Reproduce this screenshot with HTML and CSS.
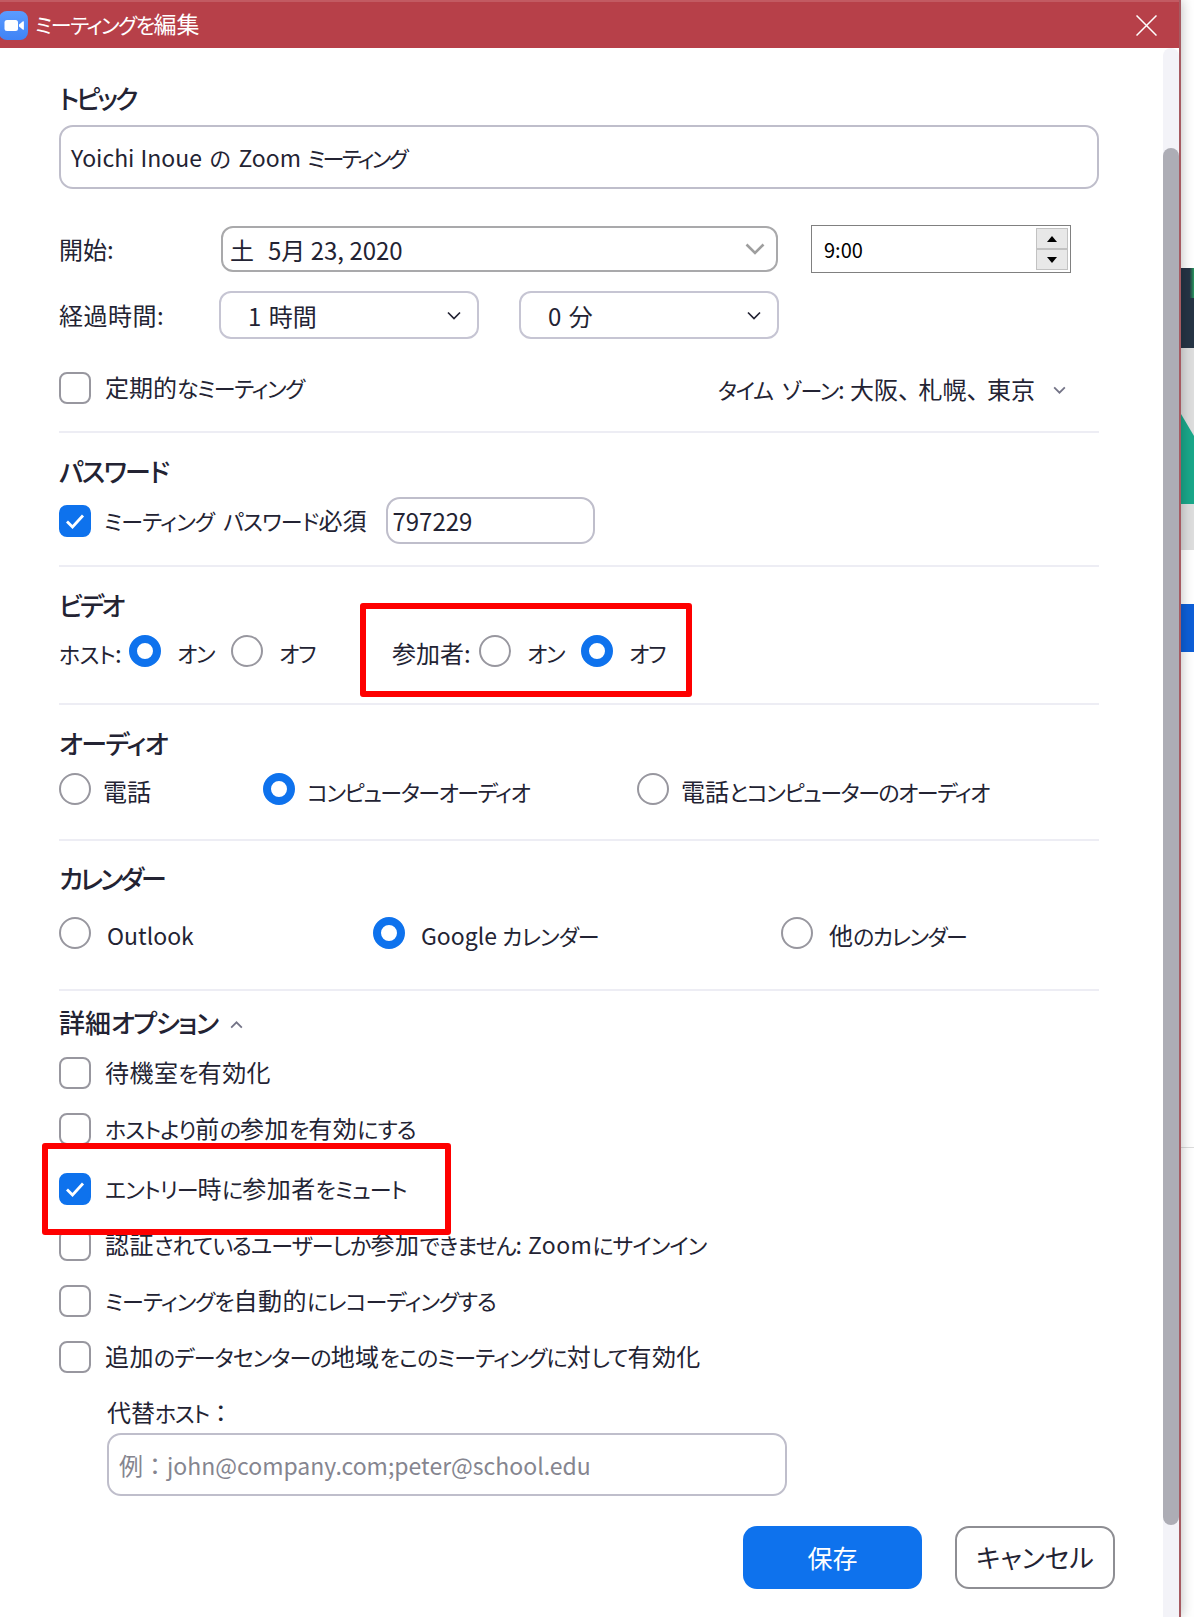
FILE: index.html
```html
<!DOCTYPE html>
<html lang="ja">
<head>
<meta charset="utf-8">
<title>ミーティングを編集</title>
<link rel="stylesheet" href="styles.css">
</head>
<body>
<div class="screen">
  <main class="dialog">
    <header class="titlebar">
      <svg class="logo" viewBox="0 0 29 29" width="29" height="29"><defs><linearGradient id="lg" x1="0" y1="0" x2="0" y2="1"><stop offset="0" stop-color="#5b9bff"/><stop offset="1" stop-color="#3f83f5"/></linearGradient></defs><rect x="-1" y="0" width="29" height="29" rx="8" fill="url(#lg)"/><rect x="4.5" y="9" width="13.5" height="11" rx="2.5" fill="#fff"/><path d="M19 13.5l4-3.2c.4-.3.9 0 .9.4v7.6c0 .5-.5.7-.9.4l-4-3.2z" fill="#fff"/></svg>
      <h1 class="title"><span class="k">ミーティングを</span>編集</h1>
      <svg class="close" viewBox="0 0 21 21" width="21" height="21"><path d="M.5.5l20 20M20.5.5l-20 20" stroke="#fff" stroke-width="1.5" fill="none"/></svg>
    </header>
    <div class="body">
      <div class="content">
        <section class="sec sec-topic">
          <h2 class="head narrow">トピック</h2>
          <div class="field topic"><span class="lat">Yoichi Inoue <span class="no">の</span> Zoom </span><span class="k">ミーティング</span></div>
          <div class="row-date">
            <span class="label label-date">開始:</span>
            <div class="date"><span class="date-text"><span class="dow">土</span>5月 23, 2020</span>
              <svg class="chev-big" viewBox="0 0 20 12" width="20" height="12"><path d="M1.5 1.5L10 10l8.5-8.5" fill="none" stroke="#9e9e9e" stroke-width="2.6"/></svg>
            </div>
            <div class="time"><span>9:00</span>
              <div class="spin">
                <div class="spin-btn"><svg viewBox="0 0 10 6" width="10" height="6"><path d="M5 0l5 6H0z" fill="#000"/></svg></div>
                <div class="spin-btn"><svg viewBox="0 0 10 6" width="10" height="6"><path d="M5 6L0 0h10z" fill="#000"/></svg></div>
              </div>
            </div>
          </div>
          <div class="row-dur">
            <span class="label label-dur">経過時間:</span>
            <div class="select"><span>1 時間</span><svg class="chev" viewBox="0 0 14 9" width="14" height="9"><path d="M1 1.5l6 6 6-6" fill="none" stroke="#232333" stroke-width="1.7"/></svg></div>
            <div class="select"><span>0 分</span><svg class="chev" viewBox="0 0 14 9" width="14" height="9"><path d="M1 1.5l6 6 6-6" fill="none" stroke="#232333" stroke-width="1.7"/></svg></div>
          </div>
          <div class="row-rec">
            <label class="opt"><span class="box"></span><span class="txt">定期的<span class="k">なミーティング</span></span></label>
            <div class="tz"><span><span class="k">タイム ゾーン</span>: 大阪<span class="fw">、</span>札幌<span class="fw">、</span>東京</span><svg viewBox="0 0 14 9" width="13" height="8"><path d="M1 1.5l6 6 6-6" fill="none" stroke="#747487" stroke-width="2"/></svg></div>
          </div>
        </section>

        <section class="sec sec-pass">
          <h2 class="head">パスワード</h2>
          <div class="row-pass">
            <label class="opt"><span class="box on"><svg viewBox="0 0 20 16" width="20" height="16"><path d="M2 8.5l5.5 5.5L18 2.5" fill="none" stroke="#fff" stroke-width="2.8"/></svg></span><span class="txt txt-near"><span class="k">ミーティング パスワード</span>必須</span></label>
            <div class="field pass">797229</div>
          </div>
        </section>

        <section class="sec sec-video">
          <h2 class="head narrow">ビデオ</h2>
          <div class="row-radio">
            <span class="label host"><span class="k">ホスト</span>:</span>
            <span class="radio on"></span><span class="rtxt onoff">オン</span>
            <span class="radio"></span><span class="rtxt onoff">オフ</span>
            <div class="part">
              <div class="frame frame-video"></div>
              <span class="label plabel">参加者:</span>
              <span class="radio"></span><span class="rtxt onoff">オン</span>
              <span class="radio on"></span><span class="rtxt onoff">オフ</span>
            </div>
          </div>
        </section>

        <section class="sec sec-audio">
          <h2 class="head">オーディオ</h2>
          <div class="row-choice">
            <span class="choice c-tel"><span class="radio"></span><span class="rtxt near">電話</span></span>
            <span class="choice c-comp"><span class="radio on"></span><span class="rtxt near"><span class="k">コンピューターオーディオ</span></span></span>
            <span class="choice"><span class="radio"></span><span class="rtxt near">電話<span class="k">とコンピューターのオーディオ</span></span></span>
          </div>
        </section>

        <section class="sec sec-cal">
          <h2 class="head narrow">カレンダー</h2>
          <div class="row-choice">
            <span class="choice c-out"><span class="radio"></span><span class="rtxt"><span class="lat">Outlook</span></span></span>
            <span class="choice c-goo"><span class="radio on"></span><span class="rtxt"><span class="lat">Google </span><span class="k">カレンダー</span></span></span>
            <span class="choice"><span class="radio"></span><span class="rtxt">他<span class="k">のカレンダー</span></span></span>
          </div>
        </section>

        <section class="sec sec-adv">
          <h2 class="head head-adv"><span><span class="hj">詳細</span>オプション</span><svg viewBox="0 0 14 9" width="13" height="8"><path d="M1 7.5l6-6 6 6" fill="none" stroke="#747487" stroke-width="2"/></svg></h2>
          <label class="opt adv"><span class="box"></span><span class="txt">待機室<span class="k">を</span>有効化</span></label>
          <label class="opt adv"><span class="box"></span><span class="txt"><span class="k">ホストより</span>前<span class="k">の</span>参加<span class="k">を</span>有効<span class="k">にする</span></span></label>
          <label class="opt adv adv-mute"><div class="frame frame-mute"></div><span class="box on"><svg viewBox="0 0 20 16" width="20" height="16"><path d="M2 8.5l5.5 5.5L18 2.5" fill="none" stroke="#fff" stroke-width="2.8"/></svg></span><span class="txt"><span class="k">エントリー</span>時<span class="k">に</span>参加者<span class="k">をミュート</span></span></label>
          <label class="opt adv"><span class="box"></span><span class="txt">認証<span class="k">されているユーザーしか</span>参加<span class="k">できません</span><span class="lat">: Zoom</span><span class="k">にサインイン</span></span></label>
          <label class="opt adv"><span class="box"></span><span class="txt"><span class="k">ミーティングを</span>自動的<span class="k">にレコーディングする</span></span></label>
          <label class="opt adv"><span class="box"></span><span class="txt">追加<span class="k">のデータセンターの</span>地域<span class="k">をこのミーティングに</span>対<span class="k">して</span>有効化</span></label>
          <div class="alt-label">代替<span class="k">ホスト</span><span class="fw">：</span></div>
          <div class="field alt">例<span class="fw">：</span><span class="lat">john@company.com;peter@school.edu</span></div>
          <div class="actions">
            <button class="btn save">保存</button>
            <button class="btn cancel">キャンセル</button>
          </div>
        </section>
      </div>
      <div class="scroll"><div class="thumb"></div></div>
    </div>
  </main>
  <aside class="behind">
    <div class="b-gap1"></div>
    <div class="b-dark"></div>
    <div class="b-grey"><svg viewBox="0 0 13 90" width="13" height="90" preserveAspectRatio="none"><path d="M0 0l13 22v68H0z" fill="#1aa88a"/></svg></div>
    <div class="b-gap2"></div>
    <div class="b-blue"></div>
    <div class="b-gap3"></div>
    <div class="b-rest"></div>
  </aside>
</div>
</body>
</html>
```
FILE: styles.css
```css
* { box-sizing: border-box; }
html, body { margin: 0; padding: 0; background: #fff; }
body {
  font-family: "Noto Sans CJK JP", "Noto Sans", sans-serif;
  font-feature-settings: "palt";
  font-size: 24px;
  color: #232333;
}
.k { font-size: 22px; letter-spacing: -1.4px; }
.lat { font-size: 23px; }
.no { font-size: 22px; margin: 0 1.5px; }
.fw { font-feature-settings: normal; }

.screen { display: flex; width: 1194px; height: 1617px; overflow: hidden; }
.dialog {
  position: relative;
  z-index: 2;
  flex: 0 0 1181px;
  display: flex;
  flex-direction: column;
  background: #fff;
  border-right: 2px solid #a65a61;
  box-shadow: 0 0 12px rgba(0, 0, 0, .28);
}
.titlebar {
  flex: 0 0 48px;
  display: flex;
  align-items: center;
  background: #b74049;
  border-top: 2px solid #c25a62;
  padding-right: 22px;
}
.logo { margin-right: 6px; }
.title { margin: 0 0 3px; flex: 1; font-size: 23px; font-weight: 400; color: #fff; line-height: 30px; }
.title .k { font-size: 21px; letter-spacing: -1.5px; }
.close { display: block; }

.body { flex: 1; display: flex; min-height: 0; }
.content { flex: 0 0 1163px; padding: 0 64px 0 59px; }
.scroll { flex: 0 0 16px; background: #f3f3f8; border-radius: 8px 8px 0 0; height: 1569px; padding-top: 100px; }
.thumb { height: 1377px; background: #adadb5; border-radius: 8px; }

.sec { border-bottom: 2px solid #ededf4; }
.sec-adv { border-bottom: 0; }
.head { margin: 0; font-size: 26px; font-weight: 500; line-height: 30px; letter-spacing: -1.6px; }
.narrow { letter-spacing: -2.9px; }
.hj { letter-spacing: 0; }
.sec-topic { padding: 35px 0 27px; }
.sec-pass { padding: 23px 0 21px; }
.sec-video { padding: 23px 0 36px; }
.sec-audio { padding: 23px 0 34px; }
.sec-cal { padding: 22px 0 40px; }
.sec-adv { padding: 16px 0 0; }

.field { border: 2px solid #bfbecb; border-radius: 14px; display: flex; align-items: center; white-space: pre; }
.topic { margin-top: 12px; height: 64px; padding-left: 10px; }
.topic .lat { word-spacing: 1px; }
.topic .k { letter-spacing: -2.7px; }
.label { line-height: 30px; white-space: nowrap; }

.row-date { display: flex; align-items: center; margin-top: 36px; height: 48px; }
.label-date { flex: 0 0 162px; }
.date {
  flex: 0 0 557px;
  height: 46px;
  border: 2px solid #a9a9ab;
  border-radius: 12px;
  display: flex;
  align-items: center;
  justify-content: space-between;
  padding: 0 11px 0 7px;
}
.dow { margin-right: 14px; }
.time {
  flex: 0 0 260px;
  margin-left: 33px;
  height: 48px;
  border: 1px solid #808080;
  display: flex;
  align-items: center;
  justify-content: space-between;
  padding: 2px 2px 2px 12px;
  font-size: 20px;
  color: #000;
}
.spin { width: 32px; height: 100%; display: flex; flex-direction: column; }
.spin-btn { flex: 1; background: #e8e8e8; border: 1px solid #c2c2c2; display: flex; align-items: center; justify-content: center; }

.row-dur { display: flex; align-items: center; margin-top: 18px; gap: 40px; }
.label-dur { flex: 0 0 120px; letter-spacing: .5px; }
.select {
  flex: 0 0 260px;
  height: 48px;
  border: 2px solid #c6c5d3;
  border-radius: 12px;
  display: flex;
  align-items: center;
  justify-content: space-between;
  padding: 0 16px 0 27px;
  word-spacing: 2px;
}

.row-rec { display: flex; justify-content: space-between; align-items: center; margin-top: 33px; height: 32px; }
.tz { display: flex; align-items: center; gap: 18px; padding-right: 33px; }
.tz svg { margin-top: 4px; }
.tz .k { word-spacing: 6px; }
.tz .fw { letter-spacing: -3.5px; }

.opt { display: flex; align-items: center; height: 32px; position: relative; }
.box {
  flex: 0 0 32px;
  height: 32px;
  border: 2px solid #98979f;
  border-radius: 8px;
  display: flex;
  align-items: center;
  justify-content: center;
}
.box.on { background: #0e72ed; border-color: #0e72ed; }
.txt { margin-left: 14px; line-height: 32px; padding-bottom: 2px; white-space: nowrap; }
.txt-near { margin-left: 13px; }
.txt-near .k { letter-spacing: -.8px; word-spacing: 5px; }
.adv .txt { letter-spacing: .45px; }
.adv .k { letter-spacing: -.95px; }

.row-pass { display: flex; align-items: center; margin-top: 11px; height: 47px; }
.pass { margin-left: 20px; width: 209px; height: 47px; padding-left: 4px; }

.radio {
  flex: 0 0 32px;
  height: 32px;
  border: 2px solid #98979f;
  border-radius: 50%;
  display: block;
}
.radio.on { border: 8px solid #0e72ed; background: #fff; }
.rtxt { line-height: 32px; margin-left: 16px; padding-top: 2px; display: block; white-space: nowrap; }
.rtxt .k { letter-spacing: -1.5px; }
.near { margin-left: 12px; padding-top: 2px; }
.c-goo .k { letter-spacing: -.9px; }

.row-radio { display: flex; margin-top: 15px; height: 32px; }
.host { margin-right: 7px; padding-top: 3px; flex: 0 0 63px; }
.host .k { letter-spacing: -.7px; }
.onoff { flex: 0 0 38px; margin-right: 16px; padding-top: 1px; font-size: 22px; letter-spacing: -1.2px; }
.part { position: relative; display: flex; margin-left: 59px; }
.plabel { flex: 0 0 79px; margin-right: 8px; padding-top: 3px; }
.frame { position: absolute; border: 6px solid #fe0000; border-radius: 3px; z-index: 3; pointer-events: none; }
.frame-video { left: -32px; top: -32px; width: 332px; height: 94px; }
.frame-mute { left: -17px; top: -30px; width: 409px; height: 92px; }

.row-choice { display: flex; margin-top: 15px; height: 32px; }
.sec-cal .row-choice { margin-top: 24px; }
.choice { display: flex; }
.c-tel { flex: 0 0 204px; }
.c-comp { flex: 0 0 374px; }
.c-out { flex: 0 0 314px; }
.c-goo { flex: 0 0 408px; }

.head-adv { display: flex; align-items: center; gap: 13px; }
.head-adv svg { margin-top: 5px; }
.adv { margin-top: 24px; }
.sec-adv .head + .adv { margin-top: 20px; }
.adv-mute { margin-top: 28px; }
.alt-label { margin: 24px 0 0 48px; line-height: 30px; }
.alt { margin: 6px 0 0 48px; width: 680px; height: 63px; padding-left: 10px; color: #85858f; }
.actions { display: flex; justify-content: flex-end; gap: 33px; margin: 30px -16px 0 0; }
.btn { height: 63px; border-radius: 14px; font: inherit; font-feature-settings: "palt"; cursor: pointer; padding: 0 0 2px; }
.save { width: 179px; background: #0e72ed; border: 0; color: #fff; font-size: 25px; }
.cancel { width: 160px; background: #fff; border: 2px solid #8e8e93; color: #232333; font-size: 26px; }

.behind { flex: 1; display: flex; flex-direction: column; background: #fff; }
.b-gap1 { height: 268px; }
.b-dark { height: 80px; background: linear-gradient(90deg, #263445 65%, #2a9a60 100%) top / 100% 30px no-repeat, #263445; }
.b-grey { height: 202px; padding-top: 66px; background: #dedede; overflow: hidden; }
.b-grey svg { display: block; }
.b-gap2 { height: 54px; }
.b-blue { height: 48px; background: #0e5fd8; }
.b-gap3 { height: 495px; }
.b-rest { flex: 1; border-top: 1px solid #dcdcdc; }
```
